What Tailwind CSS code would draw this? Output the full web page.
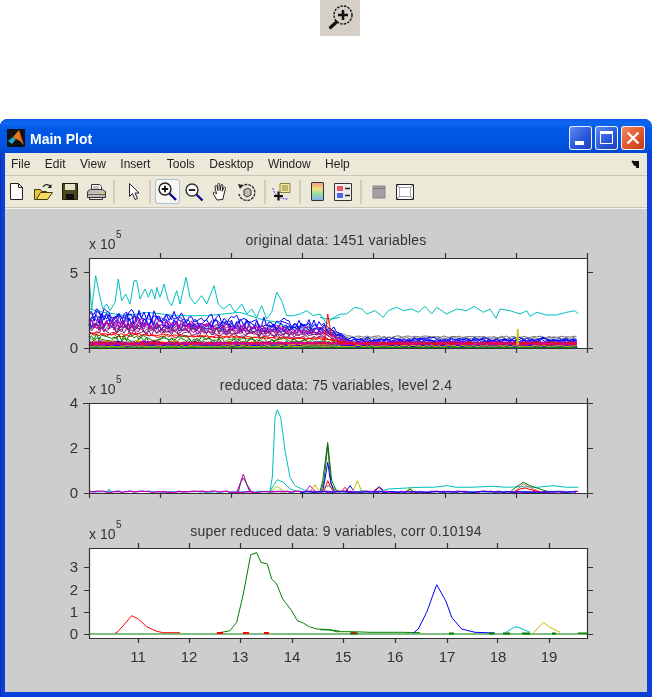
<!DOCTYPE html>
<html lang="en">
<head>
    <meta charset="UTF-8">
    <meta name="viewport" content="width=device-width, initial-scale=1.0">
    <title>Main Plot</title>
    <script src="https://cdn.jsdelivr.net/npm/@tailwindcss/browser@4"></script>
</head>
<body class="bg-white">
<div class="w-[652px] h-[697px] overflow-hidden bg-white font-['Liberation_Sans',sans-serif] blur-[0.45px]">

    <!-- zoom icon on top of the page -->
    <div class="ml-[320px] w-10 h-9 bg-[#d4d0c8]">
        <svg width="40" height="36" viewBox="0 0 40 36" fill="none">
            <circle cx="23" cy="15" r="9" stroke="#111" stroke-width="1.4" stroke-dasharray="2.4 1.2"/>
            <path d="M18 15h10M23 10v10" stroke="#111" stroke-width="2.6"/>
            <path d="M16.5 22 L10.5 27.5" stroke="#111" stroke-width="3.2" stroke-linecap="round"/>
        </svg>
    </div>

    <!-- window -->
    <div class="mt-[83px] h-[578px] rounded-t-[8px] flex flex-col bg-[#0a3fd8] px-[5px] pb-[5px] shadow-[inset_1px_0_0_#0a2fb0]">
        <!-- title bar -->
        <div class="-mx-[5px] h-[34px] shrink-0 rounded-t-[8px] flex items-center pl-[7px] pr-[7px] pt-[3px] bg-[linear-gradient(180deg,#0a5ae6_0%,#0f66f0_12%,#0058e6_30%,#0054e3_70%,#0047d0_100%)]">
            <svg width="18" height="18" viewBox="0 0 18 18" class="shrink-0">
                <rect width="18" height="18" fill="#111"/>
                <path d="M1 12 L6 8 L9 10 L5 15z" fill="#2aa7c9"/>
                <path d="M6 8 L12 1 L17 16 L13 12 L9 10z" fill="#e8761e"/>
                <path d="M12 1 L14 10 L17 16z" fill="#b83c10"/>
            </svg>
            <span class="ml-[5px] mt-[2px] text-white font-bold text-[14px] leading-none">Main Plot</span>
            <div class="ml-auto flex gap-[3px]">
                <div class="w-[23px] h-[24px] rounded-[3px] border border-white/90 bg-[linear-gradient(135deg,#5a8cf0,#2a55d8_60%,#1f44c0)] flex items-end pl-[5px] pb-[4px]"><div class="w-[9px] h-[4px] bg-white"></div></div>
                <div class="w-[23px] h-[24px] rounded-[3px] border border-white/90 bg-[linear-gradient(135deg,#5a8cf0,#2a55d8_60%,#1f44c0)] flex items-center justify-center"><div class="w-[13px] h-[13px] border border-white border-t-[3px]"></div></div>
                <div class="w-[24px] h-[24px] rounded-[3px] border border-white/90 bg-[linear-gradient(135deg,#f08a60,#e0552c_55%,#c03a14)] flex items-center justify-center">
                    <svg width="14" height="14" viewBox="0 0 14 14"><path d="M1.5 1.5l11 11M12.5 1.5l-11 11" stroke="#fff" stroke-width="2.4"/></svg>
                </div>
            </div>
        </div>

        <!-- menu bar -->
        <div class="h-[23px] shrink-0 bg-[#ece9d8] border-b border-[#c8c5b8] flex items-center pl-[6px] gap-[14.5px] text-[12px] text-[#222]">
            <span>File</span><span>Edit</span><span>View</span><span>Insert</span><span class="ml-[2px]">Tools</span><span>Desktop</span><span>Window</span><span>Help</span>
            <svg width="10" height="9" viewBox="0 0 10 9" class="ml-auto mr-[6px]"><path d="M1 1 L8 1 L8 8 L5 8 L5 5 L3 6z" fill="#111"/><path d="M1 1 L6 6" stroke="#111" stroke-width="2"/></svg>
        </div>

        <!-- toolbar -->
        <div class="h-[32px] shrink-0 bg-[#ece9d8] border-b border-[#c8c5b8] flex items-center">
            <svg class="ml-[2px] shrink-0" width="20" height="20" viewBox="0 0 20 20"><path d="M3.5 1.5h8l4 4v12h-12z" fill="#fff" stroke="#222"/><path d="M11.5 1.5v4h4" fill="none" stroke="#222"/></svg>
            <svg class="ml-[6px] shrink-0" width="20" height="20" viewBox="0 0 20 20"><path d="M1.5 7.5h6l1 2h5v2l-10 6h-2z" fill="#e8c63c" stroke="#443b10"/><path d="M3.5 17.5l4-7h12l-5 7z" fill="#f4dc5a" stroke="#443b10"/><path d="M10 5c2-3 5-3 7-1" fill="none" stroke="#222" stroke-width="1.3"/><path d="M18.5 2v4h-4z" fill="#222"/></svg>
            <svg class="ml-[7px] shrink-0" width="20" height="20" viewBox="0 0 20 20"><path d="M2.5 1.5h15v16h-15z" fill="#4a4a20" stroke="#1a1a08"/><rect x="5" y="2" width="10" height="6" fill="#e6e4c8"/><rect x="6" y="12" width="8" height="5.5" fill="#111"/></svg>
            <svg class="ml-[6px] shrink-0" width="20" height="20" viewBox="0 0 20 20"><path d="M5.5 2.5h8l2 2v5h-10z" fill="#fff" stroke="#333"/><path d="M7 5h6M7 7h6" stroke="#888"/><path d="M1.5 9.5l3-2h12l3 2v6h-18z" fill="#bdbdb8" stroke="#333"/><path d="M2 12.5h17" stroke="#666"/><path d="M3.5 15.5h13v2h-13z" fill="#e8e8e0" stroke="#333"/><rect x="14" y="10" width="3" height="1.5" fill="#e0d040"/></svg>
            <div class="ml-[7px] w-[2px] h-[24px] bg-[#d0cdbd] shrink-0"></div>
            <svg class="ml-[9px] shrink-0" width="20" height="20" viewBox="0 0 20 20"><path d="M5.5 1.5v13l3-3 2.5 6 2.5-1-2.500-5.500h4z" fill="#fff" stroke="#222"/></svg>
            <div class="ml-[5px] w-[2px] h-[24px] bg-[#d0cdbd] shrink-0"></div>
            <div class="ml-[4px] w-[25px] h-[25px] shrink-0 rounded-[3px] border border-[#a9c0d8] bg-[#f7f6f0] flex items-center justify-center">
                <svg width="21" height="21" viewBox="0 0 21 21" fill="none"><circle cx="8" cy="8" r="6" fill="#fff" stroke="#222" stroke-width="1.4"/><path d="M4.8 8h6.4M8 4.8v6.4" stroke="#111" stroke-width="1.8"/><path d="M12.5 12.5l6.5 6.5" stroke="#10108a" stroke-width="2.4"/></svg>
            </div>
            <svg class="ml-[4px] shrink-0" width="20" height="20" viewBox="0 0 20 20" fill="none"><circle cx="8" cy="8" r="6" fill="#fff" stroke="#333" stroke-width="1.4"/><path d="M4.8 8h6.4" stroke="#111" stroke-width="1.8"/><path d="M12.5 12.5l6 6" stroke="#10108a" stroke-width="2.4"/></svg>
            <svg class="ml-[7px] shrink-0" width="20" height="20" viewBox="0 0 20 20"><path d="M6 18l-3.500-6c-1-2 1-2.500 2-1l1 1-1.500-7c-.3-1.500 1.500-2 2-.5l1 4-.3-6c0-1.500 2-1.500 2 0l.5 6 .8-5c.3-1.500 2-1.200 1.800.3l-.6 5.500 1.500-3.500c.6-1.300 2.200-.7 1.800.6l-1.700 6.600-1 4.500z" fill="#fff" stroke="#222"/></svg>
            <svg class="ml-[6px] shrink-0" width="20" height="20" viewBox="0 0 20 20" fill="none"><path d="M4 5a8 8 0 1 1-2 7" stroke="#333" stroke-width="1.4" stroke-dasharray="3 1"/><path d="M1 2l5 1-3 4z" fill="#222"/><path d="M7 8l4-2 3 2v5l-4 2-3-2z" fill="#bbb" stroke="#333"/></svg>
            <div class="ml-[7px] w-[2px] h-[24px] bg-[#d0cdbd] shrink-0"></div>
            <svg class="ml-[6px] shrink-0" width="20" height="20" viewBox="0 0 20 20" fill="none"><path d="M8 1.500h10v9h-10z" fill="#f2e8a0" stroke="#8a8440"/><path d="M10 4h6M10 6h6M10 8h6" stroke="#8a8440"/><path d="M1 6c1 7 6 11 15 11" stroke="#4a3ae0" stroke-dasharray="2 1"/><path d="M2 14h9M6.500 9.500v9" stroke="#111" stroke-width="2.2"/></svg>
            <div class="ml-[7px] w-[2px] h-[24px] bg-[#d0cdbd] shrink-0"></div>
            <div class="ml-[10px] w-[13px] h-[19px] shrink-0 border border-[#333] rounded-[1px] bg-[linear-gradient(180deg,#f0a080,#f4e080_35%,#a0e0a0_60%,#80b0f0)]"></div>
            <svg class="ml-[9px] shrink-0" width="20" height="20" viewBox="0 0 20 20"><path d="M1.500 1.500h17v17h-17z" fill="#eeeeea" stroke="#333"/><rect x="4" y="4" width="6" height="5" fill="#ee5566"/><rect x="4" y="11" width="6" height="5" fill="#5566ee"/><path d="M12 6.500h5M12 13.500h5" stroke="#222" stroke-width="1.500"/></svg>
            <div class="ml-[7px] w-[2px] h-[24px] bg-[#d0cdbd] shrink-0"></div>
            <svg class="ml-[7px] shrink-0" width="20" height="20" viewBox="0 0 20 20"><rect x="4" y="4" width="12" height="12" fill="#a0a0a0" stroke="#888"/><path d="M4 6.500h12" stroke="#777"/></svg>
            <svg class="ml-[6px] shrink-0" width="20" height="20" viewBox="0 0 20 20"><path d="M1.500 2.500h17v15h-17z" fill="#fff" stroke="#222"/><path d="M4.500 5.500h11v9h-11z" fill="#fff" stroke="#aaa"/><path d="M2 3l3 3M18 3l-3 3M2 17l3-3M18 17l-3-3" stroke="#777"/></svg>
        </div>

        <!-- figure -->
        <div class="flex-1 bg-[#cdcdcd] border-t border-[#f4f3ee]">
            <svg id="fig" width="642" height="482" viewBox="5 210 642 482" class="block text-[14px] fill-[#333]" fill="none">
                <rect x="89" y="259" width="498" height="90" fill="#fff"/>
                <rect x="89" y="404" width="498" height="90" fill="#fff"/>
                <rect x="89" y="549" width="498" height="90" fill="#fff"/>
                <g id="data" fill="none" stroke-width="1"></g>

                <path fill="none" stroke="#333" stroke-width="1.2" d="M89.500 259.500h498v90h-498zM160.500 259v-5M231.500 259v-5M302.500 259v-5M373.500 259v-5M445.500 259v-5M516.500 259v-5M587.500 259v-5M89.500 349v5M160.500 349v5M231.500 349v5M302.500 349v5M373.500 349v5M445.500 349v5M516.500 349v5M587.500 349v5M89 273.500h-5M89 349.500h-5M588 273.500h5M588 349.500h5"/>
                <path fill="none" stroke="#333" stroke-width="1.2" d="M89.500 404.500h498v90h-498zM160.500 404v-5M231.500 404v-5M302.500 404v-5M373.500 404v-5M445.500 404v-5M516.500 404v-5M587.500 404v-5M89.500 494v5M160.500 494v5M231.500 494v5M302.500 494v5M373.500 494v5M445.500 494v5M516.500 494v5M587.500 494v5M89 404.500h-6M89 449.500h-5M89 494.500h-5M588 404.500h5M588 449.500h5M588 494.500h5"/>
                <path fill="none" stroke="#333" stroke-width="1.2" d="M89.500 549.500h498v90h-498zM138.500 549v-5M189.500 549v-5M240.500 549v-5M292.500 549v-5M343.500 549v-5M395.500 549v-5M447.500 549v-5M497.500 549v-5M549.500 549v-5M138.500 639v5M189.500 639v5M240.500 639v5M292.500 639v5M343.500 639v5M395.500 639v5M447.500 639v5M497.500 639v5M549.500 639v5M89 568.500h-5M89 591.500h-5M89 613.500h-5M89 635.500h-5M588 568.500h5M588 591.500h5M588 613.500h5M588 635.500h5"/>

                <g class="tracking-[0.2px]">
                    <text x="336" y="246" text-anchor="middle">original data: 1451 variables</text>
                    <text x="336" y="391" text-anchor="middle">reduced data: 75 variables, level 2.4</text>
                    <text x="336" y="537" text-anchor="middle">super reduced data: 9 variables, corr 0.10194</text>
                </g>
                <g class="text-[14px]">
                    <text x="89" y="250">x 10</text><text x="116" y="239" class="text-[10px]">5</text>
                    <text x="89" y="395">x 10</text><text x="116" y="384" class="text-[10px]">5</text>
                    <text x="89" y="540">x 10</text><text x="116" y="529" class="text-[10px]">5</text>
                </g>
                <g class="text-[15px]" text-anchor="end">
                    <text x="78" y="279">5</text><text x="78" y="354">0</text>
                    <text x="78" y="409">4</text><text x="78" y="454">2</text><text x="78" y="499">0</text>
                    <text x="78" y="573">3</text><text x="78" y="596">2</text><text x="78" y="618">1</text><text x="78" y="640">0</text>
                </g>
                <g class="text-[15px]" text-anchor="middle">
                    <text x="138" y="663">11</text><text x="189" y="663">12</text><text x="240" y="663">13</text><text x="292" y="663">14</text><text x="343" y="663">15</text><text x="395" y="663">16</text><text x="447" y="663">17</text><text x="498" y="663">18</text><text x="549" y="663">19</text>
                </g>
            </svg>
        </div>
    </div>
</div>

<script>
    const B = "#0000ff", G = "#008000", R = "#ff0000", C = "#00bfbf", M = "#bf00bf", Y = "#bfbf00", K = "#707070";
    const data = document.getElementById("data");

    let seed = 12345;
    function rnd() {
        seed = (seed * 1664525 + 1013904223) % 4294967296;
        return seed / 4294967296;
    }

    function draw(pts, color, width) {
        const l = document.createElementNS("http://www.w3.org/2000/svg", "polyline");
        l.setAttribute("points", pts.map(p => p[0].toFixed(1) + "," + p[1].toFixed(1)).join(" "));
        l.setAttribute("stroke", color);
        if (width) l.setAttribute("stroke-width", width);
        data.appendChild(l);
    }

    // points read from the 3x crops: crop x/y back to page pixels
    function crop(x0, y0, pts) {
        return pts.map(p => [x0 + p[0] / 3, y0 + p[1] / 3]);
    }

    // plot 1: noisy bundle, level in units of 1e5
    function bundle(a, b, c, color, amp) {
        const pts = [];
        for (let x = 89; x <= 578; x += 2.5) {
            let lv = x < 325 ? a + (b - a) * (x - 89) / 236 : x < 350 ? b + (c - b) * (x - 325) / 25 : c;
            lv = lv * (1 + amp * (rnd() - 0.5) * 2);
            pts.push([x, 348.5 - 15 * lv]);
        }
        draw(pts, color);
    }

    // upper curves first, the thick low band goes over them
    bundle(1.6, 1.25, 0.72, K, 0.08);
    bundle(1.4, 1.0, 0.62, K, 0.1);
    draw(crop(60, 230, [[88,240],[130,250],[200,260],[260,250],[350,260],[440,260],[540,250],[600,270],[650,280],[700,300],[780,300],[840,320]]), C);
    bundle(2.3, 1.5, 0.5, B, 0.2);
    bundle(2.1, 1.3, 0.45, B, 0.22);
    bundle(1.9, 1.2, 0.55, B, 0.25);
    bundle(1.7, 1.1, 0.42, B, 0.25);
    bundle(1.9, 1.2, 0.35, "#3030d0", 0.25);
    bundle(1.8, 1.1, 0.35, M, 0.2);
    bundle(1.6, 1.0, 0.32, M, 0.22);
    bundle(1.5, 0.9, 0.3, M, 0.25);
    bundle(1.3, 0.8, 0.28, "#802080", 0.22);
    bundle(1.4, 0.9, 0.3, "#802080", 0.25);
    bundle(1.1, 0.7, 0.3, "#802080", 0.25);
    bundle(0.95, 0.6, 0.3, R, 0.1);
    bundle(0.85, 0.55, 0.25, R, 0.12);
    bundle(0.7, 0.45, 0.18, G, 0.35);
    bundle(0.55, 0.35, 0.15, G, 0.4);
    const mix = [G, R, C, M, Y, K, B];
    for (let i = 0; i < 26; i++) {
        const a = 0.05 + rnd() * 0.35;
        bundle(a, a * 0.7, a * 0.6, mix[i % 7], 0.35);
    }
    for (let i = 0; i < 8; i++) bundle(0.3 - i * 0.02, 0.3, 0.28 - i * 0.02, i % 2 ? M : R, 0.25);
    bundle(0.1, 0.1, 0.1, B, 0.6);
    bundle(0.08, 0.08, 0.1, Y, 0.6);
    draw(crop(60, 230, [[88,160],[95,240],[107,140],[115,180],[128,240],[140,225],[150,245],[165,220],[175,150],[185,215],[197,195],[210,225],[222,155],[230,155],[240,210],[255,180],[265,205],[275,180],[285,210],[290,175],[300,205],[312,165],[325,215],[335,230],[350,185],[360,225],[378,145],[390,205],[405,225],[425,200],[440,225],[462,170],[475,225],[490,240],[510,225],[525,250],[545,225],[560,255],[575,240],[590,265],[605,230],[620,270],[635,250],[650,190],[665,215],[680,260],[700,260],[720,255],[740,245],[760,260],[780,255],[800,285],[815,270],[840,265]]), C);
    draw(crop(320, 230, [[0,265],[20,270],[35,270],[60,255],[80,255],[105,235],[125,240],[140,255],[165,245],[190,265],[205,245],[230,235],[250,245],[275,240],[295,250],[315,232],[335,255],[350,235],[380,255],[410,240],[440,245],[462,232],[490,250],[510,240],[528,268],[540,240],[570,245],[600,255],[620,245],[630,262],[650,250],[680,258],[710,258],[740,250],[765,245],[775,255]]), C);
    draw([[324,346],[327.700,315],[331,335],[334,346]], R);
    draw([[517,346],[517.700,330],[518.500,346]], Y, 1.5);
    draw([[89,349],[578,349]], G, 1.5);

    // plot 2
    const base2 = [];
    for (let x = 89; x <= 578; x += 3) base2.push([x, 493.3 - rnd() * 1.2]);
    draw(base2, C);
    draw(crop(60, 375, [[140,355],[147,345],[155,355]]), C);
    draw(crop(60, 375, [[630,352],[640,335],[652,317],[670,325],[690,345],[710,352]]), C);
    draw(crop(60, 375, [[630,355],[650,337],[670,350],[680,356]]), Y);
    draw(crop(60, 375, [[590,352],[630,352],[637,310],[645,130],[652,107],[662,130],[675,230],[690,310],[705,335],[725,345],[745,352],[770,355]]), C);
    draw(crop(60, 375, [[530,355],[540,330],[550,300],[560,330],[575,355]]), M);
    draw(crop(60, 375, [[535,355],[542,325],[550,312],[558,325],[568,350],[580,356]]), "#602060");
    draw(crop(60, 375, [[735,355],[750,335],[765,350]]), M);
    draw(crop(60, 375, [[750,352],[765,332],[778,355]]), Y);
    draw(crop(320, 375, [[0,352],[8,320],[23,205],[35,320],[50,352],[70,352]]), G);
    draw(crop(320, 375, [[3,352],[12,320],[23,215],[33,330],[45,350]]), "#206020");
    draw(crop(320, 375, [[8,352],[16,310],[23,265],[32,325],[42,352]]), B);
    draw(crop(320, 375, [[12,352],[23,320],[32,340],[40,352]]), R);
    draw(crop(320, 375, [[0,350],[25,335],[40,345],[60,352]]), K);
    draw(crop(320, 375, [[65,352],[75,340],[85,352]]), R);
    draw(crop(320, 375, [[78,352],[90,335],[102,352]]), B);
    draw(crop(320, 375, [[100,352],[112,320],[125,352]]), Y);
    draw(crop(320, 375, [[160,352],[175,340],[190,350],[200,354]]), R);
    draw(crop(320, 375, [[165,352],[178,338],[192,352]]), B);
    draw(crop(320, 375, [[258,355],[270,340],[282,355]]), Y);
    draw(crop(320, 375, [[258,355],[270,345],[280,355]]), G);
    draw(crop(320, 375, [[120,350],[170,355],[205,345],[260,342],[300,340],[340,340],[380,335],[410,340],[450,340],[520,337],[560,340],[600,338],[650,340],[700,335],[740,340],[775,340]]), C);
    draw(crop(320, 375, [[570,354],[590,338],[610,325],[630,335],[660,345],[690,355]]), G);
    draw(crop(320, 375, [[585,352],[610,330],[640,345],[665,355]]), "#e06060");
    draw(crop(320, 375, [[580,354],[600,345],[615,342],[650,352],[680,356]]), R);
    const band2 = [];
    for (let x = 89; x <= 578; x += 3) band2.push([x, 493.5 - rnd() * 1.4]);
    draw(band2, M, 1.3);
    const band3 = [];
    for (let x = 300; x <= 578; x += 3) band3.push([x, 493.5 - rnd()]);
    draw(band3, B);

    // plot 3
    draw(crop(60, 515, [[165,358],[175,352],[215,305],[235,315],[260,338],[290,352],[310,356],[360,356]]), R);
    draw([[89,635],[578,635]], G, 1.2);
    draw(crop(60, 515, [[470,358],[510,350],[530,325],[550,240],[572,122],[590,116],[603,145],[622,150],[635,195],[650,210],[668,255],[695,290],[712,320],[730,327],[748,338],[770,345],[810,347],[840,352]]), G);
    draw(crop(320, 515, [[0,347],[30,348],[50,353],[100,353],[150,355],[250,355],[300,356]]), G);
    draw(crop(320, 515, [[280,357],[295,345],[320,295],[350,212],[378,262],[395,310],[425,345],[465,355],[525,357]]), B);
    draw(crop(320, 515, [[555,357],[585,338],[600,342],[630,355]]), C);
    draw(crop(320, 515, [[640,357],[670,325],[690,340],[720,355]]), Y);
    [[217,223],[243,249],[264,269]].forEach(s => draw([[s[0],634],[s[1],634]], R, 2));
    [[350,358],[449,454],[489,494],[503,510],[522,530],[552,556],[578,587]].forEach(s => draw([[s[0],634.500],[s[1],634.500]], G, 2));
    draw([[351,634],[356,634]], "#a03000", 2);
</script>
</body>
</html>
